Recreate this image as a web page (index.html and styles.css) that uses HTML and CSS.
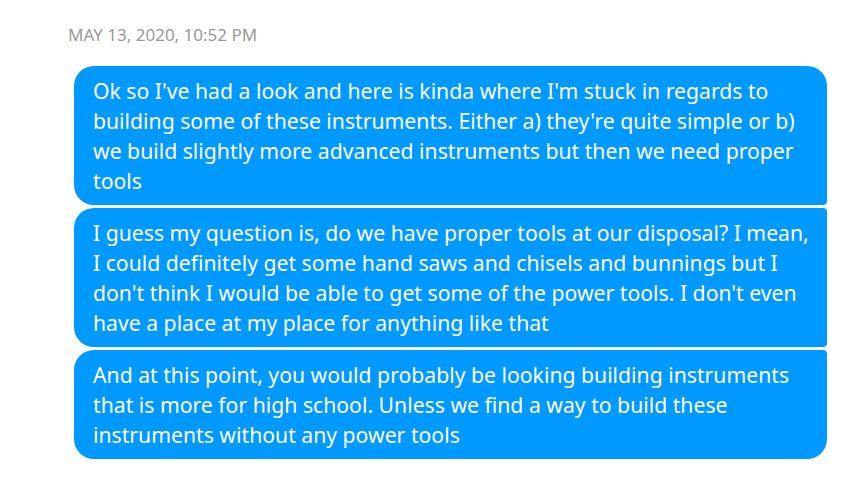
FILE: index.html
```html
<!DOCTYPE html>
<html>
<head>
<meta charset="utf-8">
<link rel="stylesheet" href="styles.css">
</head>
<body>
<div class="thread">
  <div class="stamp">MAY 13, 2020, 10:52 PM</div>
  <div class="group">
    <div class="bubble first">Ok so I've had a look and here is kinda where I'm stuck in regards to<br>building some of these instruments. Either a) they're quite simple or b)<br>we build slightly more advanced instruments but then we need proper<br>tools</div>
    <div class="bubble middle">I guess my question is, do we have proper tools at our disposal? I mean,<br>I could definitely get some hand saws and chisels and bunnings but I<br>don't think I would be able to get some of the power tools. I don't even<br>have a place at my place for anything like that</div>
    <div class="bubble last">And at this point, you would probably be looking building instruments<br>that is more for high school. Unless we find a way to build these<br>instruments without any power tools</div>
  </div>
</div>
</body>
</html>
```

FILE: styles.css
```css
html, body {
  margin: 0;
  padding: 0;
  background: #ffffff;
}
.thread {
  padding: 25px 26px 0 68px;
  font-family: "Noto Sans", "Open Sans", sans-serif;
}
.stamp {
  font-size: 17px;
  color: #999999;
  line-height: 20px;
}
.group {
  margin-top: 21px;
  margin-left: 6px;
  width: 753px;
  display: flex;
  flex-direction: column;
  gap: 3px;
}
.bubble {
  background: #0099ff;
  color: #ffffff;
  font-size: 21.2px;
  line-height: 30px;
  padding: 9.5px 18px 9.5px 19px;
  white-space: nowrap;
  border-radius: 20px 4px 4px 20px;
}
.bubble.first {
  border-radius: 20px 20px 4px 20px;
}
.bubble.last {
  border-radius: 20px 4px 20px 20px;
}
```
